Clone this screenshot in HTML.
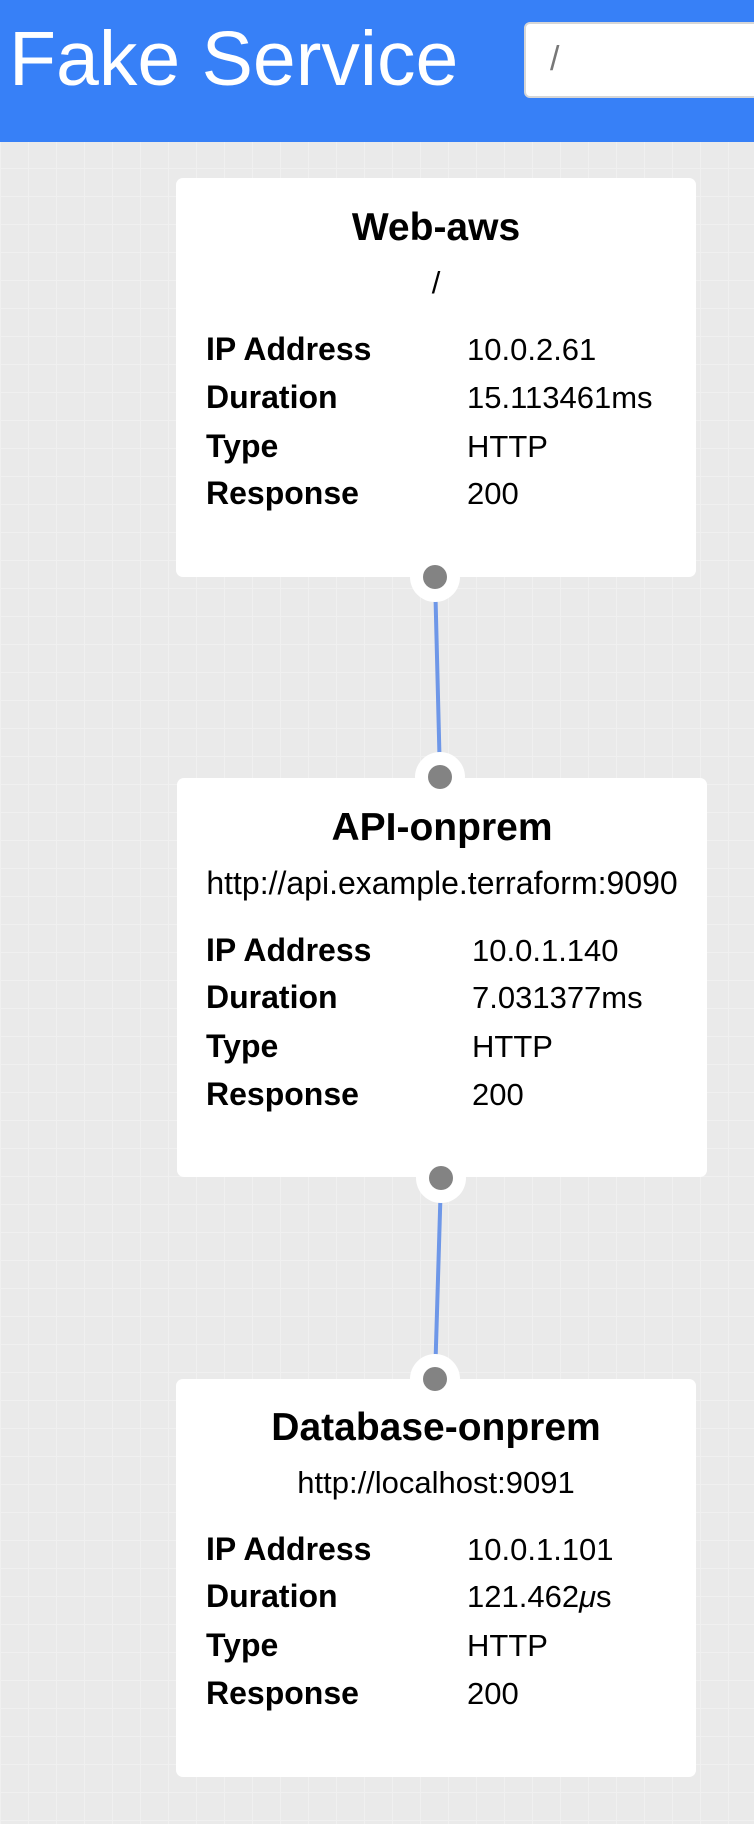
<!DOCTYPE html>
<html><head><meta charset="utf-8"><style>
*{margin:0;padding:0;box-sizing:border-box}
body{width:754px;height:1824px;overflow:hidden;position:relative;font-family:"Liberation Sans",Arial,sans-serif;color:#000;
background-color:#eaeaea;
background-image:linear-gradient(#f0f0f0 1px,transparent 1px),linear-gradient(90deg,#f0f0f0 1px,transparent 1px);
background-size:28px 28px;}
.hdr{position:absolute;left:0;top:0;width:754px;height:142px;background:#3780f7}
.ttl{position:absolute;left:9px;top:12px;font-size:77px;line-height:94px;color:#fff;white-space:nowrap}
.inp{position:absolute;left:524px;top:22px;width:260px;height:76px;background:#fff;border:2px solid #d6d6d6;border-radius:6px}
.inp span{position:absolute;left:24px;top:16px;font-size:34px;color:#777}
.card{position:absolute;background:#fff;border-radius:7px}
.t{position:absolute;left:0;width:100%;text-align:center;white-space:nowrap;line-height:1}
.b{font-weight:bold;font-size:39px}
.u{font-size:31px}
.l,.v{position:absolute;font-size:31px;line-height:1;white-space:nowrap}
.l{font-weight:bold;font-size:32px}
.ring{position:absolute;width:50px;height:50px;border-radius:50%;background:#fff}
.dot{position:absolute;width:24px;height:24px;border-radius:50%;background:#838383}
svg{position:absolute;left:0;top:0}
</style></head><body>
<div class="hdr"><div class="ttl">Fake Service</div><div class="inp"><span>/</span></div></div>

<svg width="754" height="1824"><line x1="435" y1="577" x2="440" y2="777" stroke="#6e97e8" stroke-width="4"/><line x1="441" y1="1178" x2="435" y2="1379" stroke="#6e97e8" stroke-width="4"/></svg>

<div class="ring" style="left:410px;top:552px"></div>
<div class="ring" style="left:415px;top:752px"></div>
<div class="ring" style="left:416px;top:1153px"></div>
<div class="ring" style="left:410px;top:1354px"></div>

<div class="card" style="left:176px;top:178px;width:520px;height:399px">
<div class="t b" style="top:30px">Web-aws</div>
<div class="t u" style="top:89px">/</div>
<div class="l" style="left:30px;top:155px">IP Address</div><div class="v" style="left:291px;top:156px">10.0.2.61</div>
<div class="l" style="left:30px;top:203px">Duration</div><div class="v" style="left:291px;top:204px">15.113461ms</div>
<div class="l" style="left:30px;top:252px">Type</div><div class="v" style="left:291px;top:253px">HTTP</div>
<div class="l" style="left:30px;top:299px">Response</div><div class="v" style="left:291px;top:300px">200</div>
</div>

<div class="card" style="left:177px;top:778px;width:530px;height:399px">
<div class="t b" style="top:30px">API-onprem</div>
<div class="t u" style="top:89px;font-size:32px">http://api.example.terraform:9090</div>
<div class="l" style="left:29px;top:156px">IP Address</div><div class="v" style="left:295px;top:157px">10.0.1.140</div>
<div class="l" style="left:29px;top:203px">Duration</div><div class="v" style="left:295px;top:204px">7.031377ms</div>
<div class="l" style="left:29px;top:252px">Type</div><div class="v" style="left:295px;top:253px">HTTP</div>
<div class="l" style="left:29px;top:300px">Response</div><div class="v" style="left:295px;top:301px">200</div>
</div>

<div class="card" style="left:176px;top:1379px;width:520px;height:398px">
<div class="t b" style="top:29px">Database-onprem</div>
<div class="t u" style="top:88px">http://localhost:9091</div>
<div class="l" style="left:30px;top:154px">IP Address</div><div class="v" style="left:291px;top:155px">10.0.1.101</div>
<div class="l" style="left:30px;top:201px">Duration</div><div class="v" style="left:291px;top:202px">121.462<i>μ</i>s</div>
<div class="l" style="left:30px;top:250px">Type</div><div class="v" style="left:291px;top:251px">HTTP</div>
<div class="l" style="left:30px;top:298px">Response</div><div class="v" style="left:291px;top:299px">200</div>
</div>

<div class="dot" style="left:423px;top:565px"></div>
<div class="dot" style="left:428px;top:765px"></div>
<div class="dot" style="left:429px;top:1166px"></div>
<div class="dot" style="left:423px;top:1367px"></div>
</body></html>
